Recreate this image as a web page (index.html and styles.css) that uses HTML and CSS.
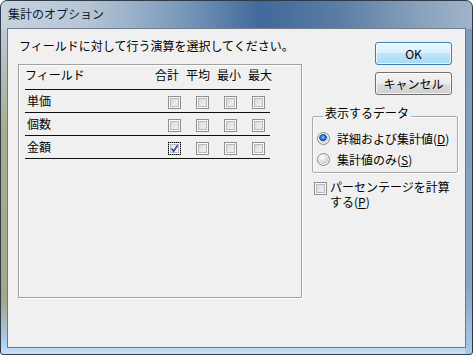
FILE: index.html
```html
<!DOCTYPE html>
<html lang="ja">
<head>
    <meta charset="UTF-8">
    <title>集計のオプション</title>
    <link rel="stylesheet" href="styles.css">
</head>
<body>
    <div class="window">
        <div class="titlebar">集計のオプション</div>
        <div class="client">
            <div class="left">
                <p class="prompt">フィールドに対して行う演算を選択してください。</p>
                <div class="listbox">
                    <div class="row head">
                        <span class="name">フィールド</span>
                        <span class="col">合計</span>
                        <span class="col">平均</span>
                        <span class="col">最小</span>
                        <span class="col">最大</span>
                    </div>
                    <div class="row">
                        <span class="name">単価</span>
                        <span class="check"></span>
                        <span class="check"></span>
                        <span class="check"></span>
                        <span class="check"></span>
                    </div>
                    <div class="row">
                        <span class="name">個数</span>
                        <span class="check"></span>
                        <span class="check"></span>
                        <span class="check"></span>
                        <span class="check"></span>
                    </div>
                    <div class="row">
                        <span class="name">金額</span>
                        <span class="check checked focus">
                            <svg width="9" height="9" viewBox="0 0 9 9"><path d="M1.6 4.6 L3.6 7.3 L7.6 1.2" fill="none" stroke="#2f4f96" stroke-width="1.6"/></svg>
                        </span>
                        <span class="check"></span>
                        <span class="check"></span>
                        <span class="check"></span>
                    </div>
                </div>
            </div>
            <div class="right">
                <button class="btn default">OK</button>
                <button class="btn">キャンセル</button>
                <fieldset class="group">
                    <legend>表示するデータ</legend>
                    <label class="option"><span class="radio checked"></span>詳細および集計値(<u>D</u>)</label>
                    <label class="option"><span class="radio"></span>集計値のみ(<u>S</u>)</label>
                </fieldset>
                <label class="percent">
                    <span class="check"></span>
                    <span class="percent-text">パーセンテージを計算する(<u>P</u>)</span>
                </label>
            </div>
        </div>
    </div>
</body>
</html>
```
FILE: styles.css
```css
body {
    margin: 0;
    background: #fff;
    font-family: "Noto Sans CJK JP", "Noto Sans", sans-serif;
    font-size: 12px;
    color: #000;
}

.window {
    width: 473px;
    height: 355px;
    box-sizing: border-box;
    border: 1px solid #2f3b48;
    border-radius: 7px 7px 3px 3px;
    padding: 0 6px 6px 6px;
    display: flex;
    flex-direction: column;
    background:
        linear-gradient(to right, #c6d3df 0%, #b6c6d6 18%, #7495b8 40%, #41699a 55%, #5b7ea4 72%, #86a0bb 88%, #9fb4c9 100%) top / 100% 28px no-repeat,
        linear-gradient(to bottom, #7f99b6 0%, #8aa3bf 80%, #a9caec 100%) right / 7px 100% no-repeat,
        linear-gradient(to bottom, #bfcbd8 8%, #a8ad90 35%, #a2a788 85%, #aacbed 96%, #c9e1f7 100%);
}

.titlebar {
    height: 27px;
    box-sizing: border-box;
    padding: 6px 0 0 1px;
    line-height: 14px;
    color: #0b1a2c;
}

.client {
    flex: 1;
    display: flex;
    gap: 10px;
    padding: 10px 0 0 10px;
    background: #f0f0f0;
    border: 1px solid #6c7a89;
}

.left {
    width: 284px;
}

.prompt {
    margin: 0 0 11px 1px;
    line-height: 14px;
}

.listbox {
    height: 234px;
    box-sizing: border-box;
    border: 1px solid #a0a0a0;
    box-shadow: inset 1px 1px 0 #fff, 1px 1px 0 #fff;
    padding: 3px 0 0 6px;
}

.row {
    width: 245px;
    height: 22px;
    display: flex;
    border-bottom: 1px solid #101010;
    line-height: 22px;
    white-space: nowrap;
}

.row > * {
    flex-shrink: 0;
}

.row .name {
    width: 143px;
    padding-left: 2px;
    box-sizing: border-box;
}

.row.head {
    height: 21px;
    line-height: 14px;
}

.row.head .name {
    width: 130px;
    padding-left: 0;
}

.row.head .col {
    width: 24px;
    margin-right: 7px;
}

.check {
    width: 13px;
    height: 13px;
    box-sizing: border-box;
    border: 1px solid #8f8f8f;
    background: linear-gradient(135deg, #d3d6da, #f6f6f7);
    box-shadow: inset 0 0 0 1px #fbfbfb, inset 0 0 0 2px #b7bbc0;
    display: flex;
    align-items: center;
    justify-content: center;
}

.row .check {
    margin: 6px 15px 0 0;
}

.row .check:last-child {
    margin-right: 0;
}

.check.checked {
    background: linear-gradient(135deg, #dfe3ec, #fbfbfd);
}

.check.focus {
    outline: 1px dotted #000;
    outline-offset: -1px;
}

.right {
    width: 146px;
    margin-top: 3px;
    display: flex;
    flex-direction: column;
}

.btn {
    width: 77px;
    height: 23px;
    margin: 0 0 7px 63px;
    padding: 0;
    font-family: inherit;
    font-size: 12px;
    line-height: 21px;
    color: #000;
    border: 1px solid #707070;
    border-radius: 3px;
    background: linear-gradient(#f2f2f2 0%, #ebebeb 50%, #dddddd 50%, #cfcfcf 100%);
    box-shadow: inset 0 0 0 1px rgba(255, 255, 255, 0.7);
}

.btn.default {
    border-color: #3c7fb1;
    background: linear-gradient(#eaf6fd 0%, #d9f0fc 50%, #bee6fd 50%, #a7d9f5 100%);
}

.group {
    margin: 4px 0 0 0;
    padding: 2px 0 2px 4px;
    border: 1px solid #a9a9a9;
    border-radius: 2px;
    box-shadow: inset 1px 1px 0 #fff, 1px 1px 0 #fff;
}

.group legend {
    margin-left: 6px;
    padding: 0 2px 6px 2px;
    line-height: 14px;
}

.option {
    display: flex;
    align-items: center;
    height: 21px;
    white-space: nowrap;
}

.radio {
    width: 13px;
    height: 13px;
    flex-shrink: 0;
    box-sizing: border-box;
    margin-right: 7px;
    border-radius: 50%;
    border: 1px solid #8a8c8f;
    background: radial-gradient(circle at 40% 35%, #ffffff 0, #e6e7e9 3px, #c9ccd0 6px);
    box-shadow: inset 0 0 0 1px #f4f4f4;
}

.radio.checked {
    background:
        radial-gradient(circle at 45% 40%, #9fd0f5 0, #2f7cc6 2px, #144a95 3.5px, transparent 4px),
        radial-gradient(circle at 40% 35%, #ffffff 0, #e6e7e9 3px, #c9ccd0 6px);
}

.percent {
    display: flex;
    align-items: flex-start;
    margin-top: 6px;
    line-height: 15px;
}

.percent .check {
    margin: 3px 3px 0 2px;
    flex-shrink: 0;
}

.percent-text {
    width: 127px;
}
```
